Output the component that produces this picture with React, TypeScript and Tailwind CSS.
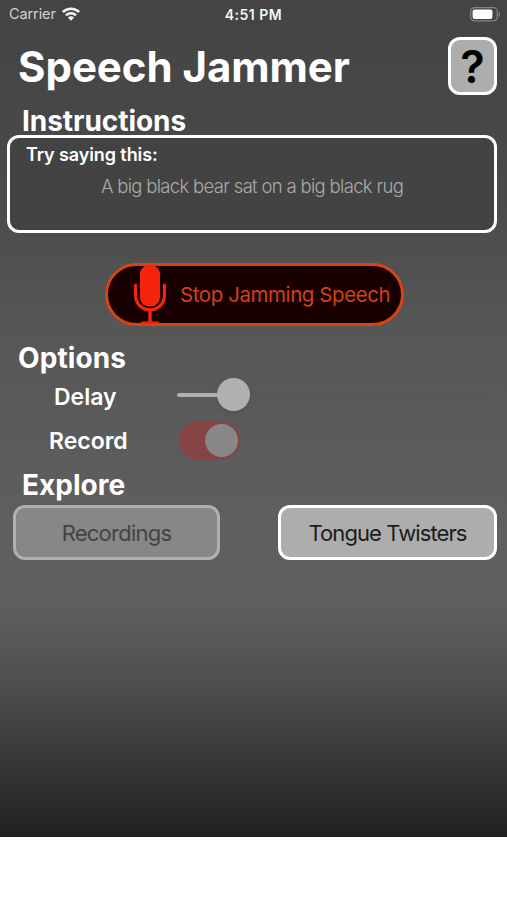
import React from 'react';

const WifiIcon = () => (
  <svg width="18" height="14" viewBox="0 0 18 14" fill="none" stroke="#f4f4f4" strokeWidth="2.5">
    <path d="M0.9 5C5.4 0.6 12.6 0.6 17.1 5" />
    <path d="M4 8.3C6.8 5.6 11.2 5.6 14 8.3" />
    <path d="M6 10.6C7.7 8.9 10.3 8.9 12 10.6L9 13.8Z" fill="#f4f4f4" stroke="none" />
  </svg>
);

const BatteryIcon = () => (
  <svg width="31" height="15" viewBox="0 0 31 15" fill="none">
    <rect x="0.7" y="0.7" width="26.6" height="13.2" rx="3.8" stroke="#858585" strokeWidth="1.2" />
    <rect x="2.6" y="2.6" width="19.8" height="9.4" rx="2" fill="#fff" />
    <path d="M28.7 5V9.7C30.5 9 30.5 5.7 28.7 5Z" fill="#858585" />
  </svg>
);

const MicIcon = () => (
  <svg width="34" height="59" viewBox="0 0 34 59" fill="none">
    <rect x="7" y="0" width="20" height="41.5" rx="9" fill="#f7240c" />
    <path d="M2.5 20V29.5C2.5 50 31.5 50 31.5 29.5V20" stroke="#f7240c" strokeWidth="3.2" strokeLinecap="round" />
    <path d="M17 44V58" stroke="#f7240c" strokeWidth="3.4" />
    <path d="M7.5 59V58Q7.5 56.5 9 56.5H25Q26.5 56.5 26.5 58V59Z" fill="#f7240c" />
  </svg>
);

const StatusBar = () => (
  <div className="grid h-[28px] grid-cols-3 items-center pl-[9px] pr-[6px]">
    <div className="flex items-center gap-[6px]">
      <span className="text-[14.5px] tracking-[-0.1px] text-[#d2d2d2]">Carrier</span>
      <WifiIcon />
    </div>
    <span className="pr-[3px] text-center text-[14px] font-semibold tracking-[0.5px] text-[#f4f4f4]">4:51 PM</span>
    <div className="flex justify-end">
      <BatteryIcon />
    </div>
  </div>
);

const App: React.FC = () => {
  return (
    <div className="flex h-[900px] w-[507px] flex-col overflow-hidden bg-white font-['Inter',sans-serif] whitespace-nowrap">
      <main className="h-[837px] bg-[linear-gradient(to_bottom,#444444_0px,#474747_100px,#4a4a4a_200px,#565656_320px,#5f5f5f_530px,#606060_600px,#4f4f4f_680px,#3a3a3a_755px,#222222_836px)] text-white">
        <StatusBar />

        <header className="flex items-start justify-between pt-[9px] pr-[10px] pl-[18px]">
          <h1 className="pt-[5px] text-[42px] leading-[50px] font-bold tracking-[-0.05px]">Speech Jammer</h1>
          <button className="flex h-[58px] w-[49px] items-center justify-center rounded-[12px] border-[3px] border-white bg-[#adadad] text-[45px] leading-none font-semibold text-black">
            ?
          </button>
        </header>

        <h2 className="mt-[10px] pl-[22px] text-[28px] leading-[32px] font-bold tracking-[-0.05px]">Instructions</h2>
        <section className="mt-[-2px] mr-[10px] ml-[7px] h-[98px] rounded-[12px] border-[3px] border-white bg-[#434343] px-[16px] pt-[6px]">
          <h3 className="text-[18px] leading-[22px] font-semibold tracking-[-0.1px]">Try saying this:</h3>
          <p className="mt-[8px] text-center text-[18.5px] leading-[24px] font-light tracking-[-0.68px] text-[#aaaaaa]">
            A big black bear sat on a big black rug
          </p>
        </section>

        <button className="mt-[30px] ml-[105px] flex h-[63px] w-[299px] items-center rounded-full border-[3px] border-[#d64413] bg-[#180000] pl-[25px] text-[20.5px] text-[#cf4217]">
          <MicIcon />
          <span className="ml-[13px] pt-[2px] tracking-[-0.42px]">Stop Jamming Speech</span>
        </button>

        <h2 className="mt-[16px] pl-[18px] text-[28px] leading-[32px] font-bold tracking-[0.1px]">Options</h2>
        <div className="flex h-[43px] items-center">
          <span className="ml-[54px] w-[123px] pt-[3px] text-[23px] leading-[28px] font-semibold">Delay</span>
          <div className="mt-[-2px] flex items-center">
            <div className="h-[4px] w-[42px] rounded-l-full bg-[#b0b0b0]" />
            <div className="-ml-[2px] h-[33px] w-[33px] rounded-full bg-[#b0b0b0] shadow-[0_2px_5px_rgba(0,0,0,0.08)]" />
            <div className="h-[4px] w-[235px] rounded-r-full bg-[#575757]" />
          </div>
        </div>
        <div className="flex h-[46px] items-center">
          <span className="ml-[49px] w-[130px] pt-[2px] text-[23px] leading-[28px] font-semibold">Record</span>
          <div className="mt-px flex h-[39px] w-[61px] items-center justify-end rounded-full bg-[#874444] pr-[2px]">
            <div className="h-[33px] w-[33px] rounded-full bg-[#888888]" />
          </div>
        </div>

        <h2 className="mt-[6px] pl-[22px] text-[28px] leading-[32px] font-bold">Explore</h2>
        <div className="mt-[4px] flex justify-between pr-[10px] pl-[13px]">
          <button className="h-[55px] w-[207px] rounded-[12px] border-[3px] border-[#b0b0b0] bg-[#878787] pt-px text-[22px] tracking-[-0.75px] text-[#434343]">
            Recordings
          </button>
          <button className="h-[55px] w-[219px] rounded-[12px] border-[3px] border-white bg-[#adadad] pt-px text-[22px] tracking-[-0.9px] text-[#1c1c1c]">
            Tongue Twisters
          </button>
        </div>
      </main>
    </div>
  );
};

export default App;
